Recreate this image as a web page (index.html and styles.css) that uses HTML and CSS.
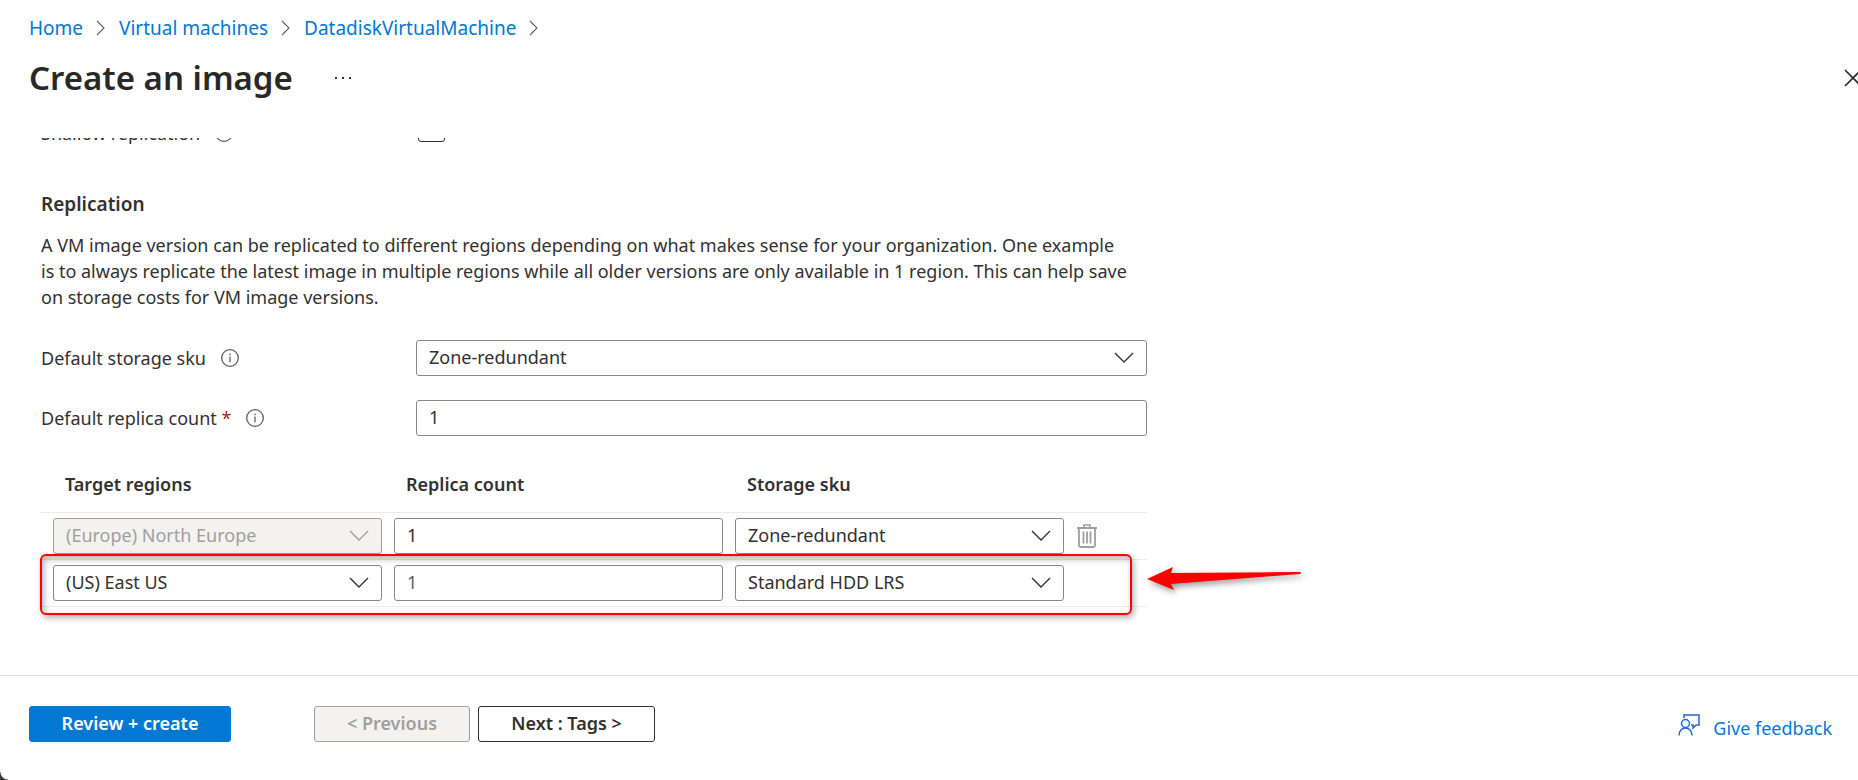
FILE: index.html
```html
<!DOCTYPE html>
<html lang="en">
<head>
  <meta charset="UTF-8" />
  <meta name="viewport" content="width=device-width, initial-scale=1.0"/>
  <title>Create an image</title>
  <link rel="stylesheet" href="styles.css">
</head>
<body>

  <svg class="defs" aria-hidden="true">
    <symbol id="info" viewBox="0 0 18 18">
      <circle cx="9" cy="9" r="8.3" fill="none" stroke="currentColor" stroke-width="1.3"/>
      <path d="M9 7.5v5.8M9 4.6v1.6" fill="none" stroke="currentColor" stroke-width="1.3"/>
    </symbol>
    <symbol id="down" viewBox="0 0 20 12">
      <path d="M1 1l9 9 9-9" fill="none" stroke="currentColor" stroke-width="1.4"/>
    </symbol>
    <symbol id="right" viewBox="0 0 10 16">
      <path d="M1 1l7 7-7 7" fill="none" stroke="currentColor" stroke-width="1.1"/>
    </symbol>
  </svg>

  <header>
    <nav class="breadcrumb" aria-label="Breadcrumb">
      <a href="#">Home</a>
      <svg><use href="#right"/></svg>
      <a href="#">Virtual machines</a>
      <svg><use href="#right"/></svg>
      <a href="#">DatadiskVirtualMachine</a>
      <svg><use href="#right"/></svg>
    </nav>
    <div class="title-bar">
      <h1>Create an image</h1>
      <button type="button" class="more" aria-label="More">
        <svg viewBox="0 0 20 4"><path d="M1 1h2v2H1zM8 1h2v2H8zM15 1h2v2h-2z" fill="#323130"/></svg>
      </button>
      <button type="button" class="close" aria-label="Close">
        <svg viewBox="0 0 18 18"><path d="M1 1l16 16M17 1L1 17" stroke="#292827" stroke-width="1.6"/></svg>
      </button>
    </div>
  </header>

  <main>
    <form class="form" id="imageForm">
      <div class="field shallow">
        <div class="field-label">
          <label for="shallow">Shallow replication</label>
          <svg class="info"><use href="#info"/></svg>
        </div>
        <input type="checkbox" id="shallow">
      </div>

      <h2>Replication</h2>
      <p>A VM image version can be replicated to different regions depending on what makes sense for your organization. One example<br>
        is to always replicate the latest image in multiple regions while all older versions are only available in 1 region. This can help save<br>
        on storage costs for VM image versions.</p>

      <div class="field">
        <div class="field-label">
          <label for="defaultSku">Default storage sku</label>
          <svg class="info"><use href="#info"/></svg>
        </div>
        <div class="select">
          <select id="defaultSku"><option>Zone-redundant</option></select>
          <svg><use href="#down"/></svg>
        </div>
      </div>

      <div class="field">
        <div class="field-label">
          <label for="defaultCount">Default replica count <span class="required">*</span></label>
          <svg class="info"><use href="#info"/></svg>
        </div>
        <input type="text" id="defaultCount" value="1">
      </div>

      <div class="regions">
        <table>
          <thead>
            <tr>
              <th>Target regions</th>
              <th>Replica count</th>
              <th>Storage sku</th>
              <th class="actions"></th>
            </tr>
          </thead>
          <tbody>
            <tr>
              <td>
                <div class="select">
                  <select aria-label="Target region" disabled><option>(Europe) North Europe</option></select>
                  <svg><use href="#down"/></svg>
                </div>
              </td>
              <td><input type="text" aria-label="Replica count" value="1"></td>
              <td>
                <div class="select">
                  <select aria-label="Storage sku"><option>Zone-redundant</option></select>
                  <svg><use href="#down"/></svg>
                </div>
              </td>
              <td class="actions">
                <button type="button" class="delete" aria-label="Delete" disabled>
                  <svg viewBox="0 0 20 24" fill="none" stroke="#a19f9d">
                    <path d="M0 4h20" stroke-width="2"/>
                    <path d="M7 3V1h6v2" stroke-width="1.6"/>
                    <path d="M2 4v17.5q0 1.5 1.500 1.500h13q1.500 0 1.500-1.500V4" stroke-width="1.8"/>
                    <path d="M6.500 7.500v12M10 7.500v12M13.500 7.500v12" stroke-width="1.8"/>
                  </svg>
                </button>
              </td>
            </tr>
            <tr>
              <td>
                <div class="select">
                  <select aria-label="Target region"><option>(US) East US</option></select>
                  <svg><use href="#down"/></svg>
                </div>
              </td>
              <td><input type="text" aria-label="Replica count" placeholder="1"></td>
              <td>
                <div class="select">
                  <select aria-label="Storage sku"><option>Standard HDD LRS</option></select>
                  <svg><use href="#down"/></svg>
                </div>
              </td>
              <td class="actions"></td>
            </tr>
          </tbody>
        </table>
        <div class="highlight"></div>
        <svg class="arrow" viewBox="0 0 154 24"><path d="M0 12L26 0l-2 6 129-1q2 1 0 2L24 17l3 6z" fill="#fe0000"/></svg>
      </div>
    </form>
  </main>

  <footer>
    <button type="submit" form="imageForm" class="primary">Review + create</button>
    <button type="button" class="previous" disabled>&lt; Previous</button>
    <button type="button" class="next">Next : Tags &gt;</button>
    <a href="#" class="feedback">
      <svg viewBox="0 0 22 22" fill="none" stroke="#1f66d6" stroke-width="1.5">
        <path d="M6 4V1h15v10h-3l-3 3v-3h-2"/>
        <circle cx="7.500" cy="9.500" r="4"/>
        <path d="M1 21.500c0-4.500 3-7.500 6.500-7.500s6.500 3 6.500 7.500"/>
      </svg>
      Give feedback
    </a>
  </footer>
  <div class="corner"></div>

</body>
</html>
```
FILE: styles.css
```css
* {
  box-sizing: border-box;
}

body {
  margin: 0;
  height: 100vh;
  display: flex;
  flex-direction: column;
  overflow: hidden;
  background: #fff;
  color: #323130;
  font-family: "Noto Sans", "Open Sans", sans-serif;
  font-size: 18px;
  line-height: 26px;
}

button, input, select {
  font: inherit;
  color: inherit;
}

a {
  color: #0078d4;
  text-decoration: none;
}

.defs {
  position: absolute;
  width: 0;
  height: 0;
}

header {
  flex: none;
  height: 138px;
  padding: 15px 0 0 29px;
}

.breadcrumb {
  display: flex;
  align-items: center;
  gap: 13px;
  font-size: 19px;
}

.breadcrumb svg {
  width: 10px;
  height: 16px;
  color: #605e5c;
}

.title-bar {
  display: flex;
  align-items: center;
  height: 48px;
  margin-top: 13px;
  overflow: hidden;
}

h1 {
  margin: 0;
  font-size: 33px;
  line-height: 48px;
  font-weight: 600;
  color: #292827;
}

.more, .close, .delete {
  display: flex;
  padding: 0;
  border: none;
  background: none;
}

.more {
  margin-left: 41px;
}

.more svg {
  width: 20px;
  height: 4px;
}

.close {
  margin: 0 -4px 0 auto;
}

.close svg {
  width: 18px;
  height: 18px;
}

main {
  flex: 1;
  overflow: hidden;
  padding-left: 41px;
}

.form {
  max-width: 1106px;
}

.field {
  display: flex;
  align-items: center;
  margin-bottom: 24px;
}

/* scrolled partly under the header */
.shallow {
  height: 36px;
  margin: -23px 0 40px;
}

.field-label {
  display: flex;
  align-items: center;
  gap: 15px;
  width: 375px;
  flex: none;
}

.info {
  width: 18px;
  height: 18px;
  color: #605e5c;
}

.required {
  color: #a4262c;
}

h2 {
  margin: 0 0 15px;
  font-size: 19px;
  line-height: 26px;
  font-weight: 600;
}

p {
  margin: 0 0 30px;
  white-space: nowrap;
}

input[type="text"], select {
  display: block;
  width: 100%;
  height: 36px;
  padding: 0 12px 2px;
  border: 1px solid #8a8886;
  border-radius: 3px;
  background: #fff;
  appearance: none;
}

input::placeholder {
  color: #605e5c;
  opacity: 1;
}

input[type="checkbox"] {
  appearance: none;
  align-self: flex-start;
  width: 27px;
  height: 27px;
  margin: 0 0 0 2px;
  border: 1px solid #323130;
  border-radius: 3px;
}

.select {
  position: relative;
  width: 100%;
}

.select svg {
  position: absolute;
  top: 12px;
  right: 13px;
  width: 20px;
  height: 12px;
  pointer-events: none;
}

select:disabled {
  background: #f3f2f1;
  border-color: #a19f9d;
  color: #a19f9d;
  opacity: 1;
}

select:disabled + svg {
  color: #a19f9d;
}

.regions {
  position: relative;
}

table {
  width: 100%;
  table-layout: fixed;
  border-collapse: separate;
  border-spacing: 0;
}

th, td {
  border-bottom: 1px solid #edebe9;
  text-align: left;
}

th {
  height: 53px;
  padding: 0 0 4px 24px;
  font-weight: 600;
}

td {
  padding: 5px 0 5px 12px;
}

.actions {
  width: 83px;
}

td.actions {
  padding-left: 13px;
}

.delete svg {
  width: 20px;
  height: 24px;
}

.highlight {
  position: absolute;
  left: -1px;
  right: 15px;
  bottom: -8px;
  height: 61px;
  border: 2px solid #fe0000;
  border-radius: 6px;
  box-shadow: 2px 3px 6px rgba(0, 0, 0, 0.3), inset 2px 3px 6px rgba(0, 0, 0, 0.3);
  pointer-events: none;
}

.arrow {
  position: absolute;
  left: 100%;
  bottom: 16px;
  width: 154px;
  height: 24px;
  overflow: visible;
  filter: drop-shadow(2px 3px 3px rgba(0, 0, 0, 0.4));
}

footer {
  display: flex;
  flex: none;
  align-items: flex-start;
  height: 105px;
  padding: 30px 26px 0 29px;
  border-top: 1px solid #dcdcdc;
}

footer button {
  height: 36px;
  padding: 0 0 2px;
  border: 1px solid #323130;
  border-radius: 3px;
  background: #fff;
  font-weight: 600;
}

footer .primary {
  width: 202px;
  border-color: #0078d4;
  background: #0078d4;
  color: #fff;
}

footer .previous {
  width: 156px;
  margin: 0 8px 0 83px;
  border-color: #a19f9d;
  background: #f3f2f1;
  color: #a19f9d;
}

footer .next {
  width: 177px;
}

.feedback {
  display: flex;
  align-items: center;
  gap: 13px;
  margin: 8px 0 0 auto;
}

.feedback svg {
  width: 22px;
  height: 22px;
  margin-bottom: 6px;
}

/* rounded edge of the window behind */
.corner {
  position: fixed;
  left: 0;
  bottom: 0;
  width: 8px;
  height: 8px;
  background: radial-gradient(circle at 100% 0, transparent 7px, #3b3b3b 8px);
}
```
